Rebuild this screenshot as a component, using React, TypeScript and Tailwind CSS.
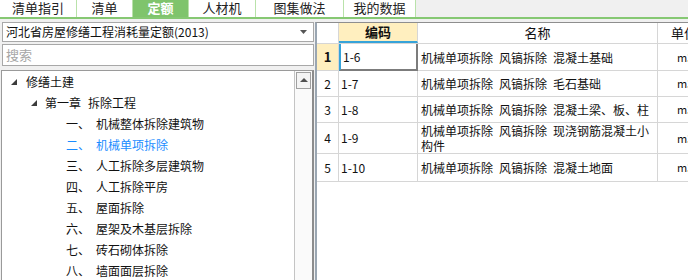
import React from 'react';

const tabs = [
  { label: '清单指引', w: 'w-[77px]' },
  { label: '清单', w: 'w-[56px]' },
  { label: '定额', w: 'w-[56px]', active: true },
  { label: '人材机', w: 'w-[67px]' },
  { label: '图集做法', w: 'w-[88px]' },
  { label: '我的数据', w: 'w-[72px]' },
];

const chapters = [
  { num: '一、', name: '机械整体拆除建筑物' },
  { num: '二、', name: '机械单项拆除', active: true },
  { num: '三、', name: '人工拆除多层建筑物' },
  { num: '四、', name: '人工拆除平房' },
  { num: '五、', name: '屋面拆除' },
  { num: '六、', name: '屋架及木基层拆除' },
  { num: '七、', name: '砖石砌体拆除' },
  { num: '八、', name: '墙面面层拆除' },
];

const rows = [
  { no: '1', code: '1-6', name: ['机械单项拆除', '风镐拆除', '混凝土基础'], h: 'h-[27px]' },
  { no: '2', code: '1-7', name: ['机械单项拆除', '风镐拆除', '毛石基础'], h: 'h-[26px]' },
  { no: '3', code: '1-8', name: ['机械单项拆除', '风镐拆除', '混凝土梁、板、柱'], h: 'h-[26px]' },
  { no: '4', code: '1-9', name: ['机械单项拆除', '风镐拆除', '现浇钢筋混凝土小'], tail: '构件', h: 'h-[31px]' },
  { no: '5', code: '1-10', name: ['机械单项拆除', '风镐拆除', '混凝土地面'], h: 'h-[28px]' },
];

function Caret() {
  // small filled triangle used by expanded tree nodes
  return (
    <svg width="6" height="6" viewBox="0 0 6 6" className="shrink-0">
      <polygon points="6,0 6,6 0,6" fill="#3c3c3c" />
    </svg>
  );
}

export default function App() {
  return (
    <div className="w-[688px] h-[280px] overflow-hidden bg-[#f0f0f0] flex flex-col text-[12px] text-[#111] font-['Noto_Sans_CJK_SC',sans-serif]">
      {/* tab strip */}
      <div className="h-[19px] shrink-0 flex border-b-2 border-[#86c873]">
        {tabs.map((t) => (
          <div
            key={t.label}
            className={`${t.w} h-[17px] flex justify-center border-r border-[#b9e2aa] text-[13px] leading-[15px] ${
              t.active ? 'bg-[#7fc46c] text-white font-bold' : 'bg-white text-[#222]'
            }`}
          >
            {t.label}
          </div>
        ))}
      </div>

      <div className="flex flex-1 min-h-0">
        {/* left panel */}
        <div className="w-[314px] shrink-0 flex flex-col pt-[3px] pl-[1px]">
          <div className="h-[23px] ml-[1px] bg-white border border-[#a8a8a8] flex items-center pl-[3px] pr-[6px]">
            <span className="flex-1">河北省房屋修缮工程消耗量定额(2013)</span>
            <svg width="7" height="4" viewBox="0 0 7 4">
              <polygon points="0,0 7,0 3.5,4" fill="#555" />
            </svg>
          </div>
          <div className="h-[22px] mt-[2px] ml-[1px] bg-white border border-[#a8a8a8] flex items-center pl-[3px] text-[13px] text-[#a6a6a6]">
            搜索
          </div>
          <div className="flex-1 mt-[4px] bg-white border border-[#9a9a9a] border-r-2 border-r-[#8c8c8c] flex">
            <div className="flex-1 pt-[1px]">
              <div className="h-[21px] flex items-center pl-[9px] gap-[9px]">
                <Caret />
                <span>修缮土建</span>
              </div>
              <div className="h-[21px] flex items-center pl-[29px] gap-[8px]">
                <Caret />
                <span>
                  第一章<span className="ml-[7px]">拆除工程</span>
                </span>
              </div>
              {chapters.map((c) => (
                <div
                  key={c.num}
                  className={`h-[21px] flex items-center pl-[64px] ${c.active ? 'text-[#1a8cff]' : ''}`}
                >
                  <span className="w-[30px]">{c.num}</span>
                  <span>{c.name}</span>
                </div>
              ))}
            </div>
            <div className="w-[18px] border-l border-[#c4c4c4] bg-[#fafafa] pt-[1px] pr-[1px]">
              <div className="h-[17px] ml-[1px] border border-[#a0a0a0] bg-[#f4f4f4] flex items-center justify-center">
                <svg width="8" height="4" viewBox="0 0 8 4">
                  <polygon points="0,4 8,4 4,0" fill="#505050" />
                </svg>
              </div>
            </div>
          </div>
        </div>

        {/* grid */}
        <div className="flex-1 ml-[1px] mt-[3px] bg-white border-t border-[#8e8e8e] border-l-2 border-l-[#9aa6b2] flex flex-col">
          <div className="h-[21px] flex border-b border-[#d6d6d6]">
            <div className="w-[22px] border-r border-[#d6d6d6]" />
            <div className="w-[79px] bg-[#ffefbf] border-b-2 border-[#36a3d9] border-r border-r-[#d6d6d6] flex items-center justify-center font-bold text-[13px]">
              编码
            </div>
            <div className="w-[240px] border-r border-[#d6d6d6] flex items-center justify-center text-[13px]">
              名称
            </div>
            <div className="flex-1 flex items-center pl-[13px] whitespace-nowrap text-[13px]">单位</div>
          </div>
          {rows.map((r, i) => (
            <div key={r.no} className={`${r.h} flex border-b border-[#d6d6d6]`}>
              <div
                className={`w-[22px] border-r border-[#d6d6d6] flex items-center justify-center ${
                  i === 0 ? 'bg-[#ffefbf] font-bold text-[13px]' : ''
                }`}
              >
                {r.no}
              </div>
              <div
                className={`w-[79px] flex items-center pl-[2px] ${
                  i === 0
                    ? 'border-l-2 border-l-[#36a3d9] border-r-2 border-b-2 border-[#7c7c7c] -mb-[1px]'
                    : 'border-r border-[#d6d6d6]'
                }`}
              >
                {r.code}
              </div>
              <div className="w-[240px] border-r border-[#d6d6d6] flex flex-col justify-center pl-[3px] leading-[15px] text-[12px]">
                <div className="whitespace-nowrap">
                  {r.name.map((s, k) => (
                    <span key={k} className={k > 0 ? 'ml-[6px]' : ''}>
                      {s}
                    </span>
                  ))}
                </div>
                {r.tail && <div>{r.tail}</div>}
              </div>
              <div className="flex-1 flex items-center pl-[19px] text-[11px] whitespace-nowrap">m3</div>
            </div>
          ))}
        </div>
      </div>
    </div>
  );
}
